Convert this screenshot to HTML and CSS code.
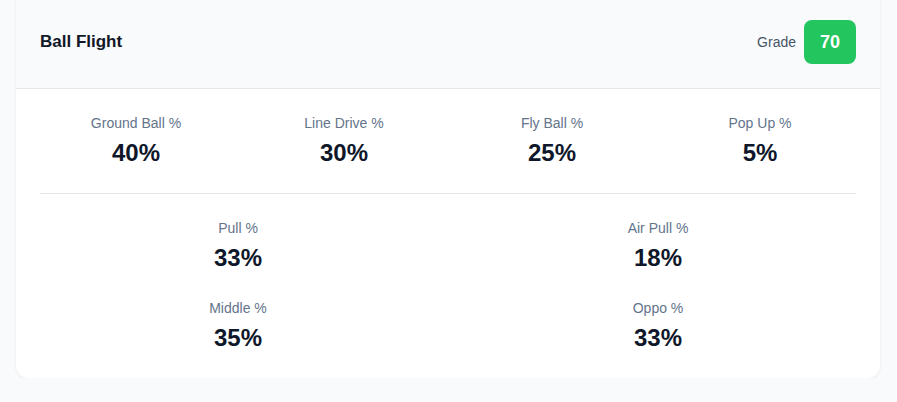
FILE: index.html
```html
<!DOCTYPE html>
<html>
<head>
<meta charset="utf-8">
<link rel="stylesheet" href="styles.css">
</head>
<body>
<div class="page">
  <div class="card">
    <div class="card-header">
      <h2 class="title">Ball Flight</h2>
      <div class="grade">
        <span class="grade-label">Grade</span>
        <span class="grade-badge">70</span>
      </div>
    </div>
    <div class="card-body">
      <div class="grid4">
        <div class="stat"><div class="label">Ground Ball %</div><div class="value">40%</div></div>
        <div class="stat"><div class="label">Line Drive %</div><div class="value">30%</div></div>
        <div class="stat"><div class="label">Fly Ball %</div><div class="value">25%</div></div>
        <div class="stat"><div class="label">Pop Up %</div><div class="value">5%</div></div>
      </div>
      <div class="grid2">
        <div class="stat"><div class="label">Pull %</div><div class="value">33%</div></div>
        <div class="stat"><div class="label">Air Pull %</div><div class="value">18%</div></div>
        <div class="stat"><div class="label">Middle %</div><div class="value">35%</div></div>
        <div class="stat"><div class="label">Oppo %</div><div class="value">33%</div></div>
      </div>
    </div>
  </div>
</div>
</body>
</html>
```
FILE: styles.css
```css
* { box-sizing: border-box; }
html, body {
  margin: 0;
  background: #f8fafc;
  font-family: "Liberation Sans", Arial, sans-serif;
}
.page {
  padding: 0 17px 0 16px;
}
.card {
  background: #ffffff;
  border-radius: 0 0 12px 12px;
  box-shadow: 0 1px 3px rgba(15, 23, 42, 0.08);
}
.card-header {
  display: flex;
  align-items: center;
  justify-content: space-between;
  height: 89px;
  padding: 0 24px 4px 24px;
  background: #f9fafb;
  border-bottom: 1px solid #e5e7eb;
}
.title {
  margin: 0;
  font-size: 17px;
  font-weight: 700;
  color: #111827;
}
.grade {
  display: flex;
  align-items: center;
  gap: 8px;
}
.grade-label {
  font-size: 14px;
  color: #475569;
}
.grade-badge {
  display: flex;
  align-items: center;
  justify-content: center;
  width: 52px;
  height: 44px;
  border-radius: 8px;
  background: #22c55e;
  color: #ffffff;
  font-size: 18px;
  font-weight: 700;
}
.card-body {
  padding: 24px;
}
.grid4 {
  display: grid;
  grid-template-columns: repeat(4, 1fr);
  column-gap: 16px;
  padding-bottom: 24px;
  border-bottom: 1px solid #e5e7eb;
}
.grid2 {
  display: grid;
  grid-template-columns: repeat(2, 1fr);
  column-gap: 24px;
  row-gap: 24px;
  padding-top: 24px;
}
.stat {
  text-align: center;
}
.label {
  font-size: 14px;
  line-height: 20px;
  color: #64748b;
}
.value {
  margin-top: 4px;
  font-size: 24px;
  line-height: 32px;
  font-weight: 700;
  color: #0f172a;
}
```
